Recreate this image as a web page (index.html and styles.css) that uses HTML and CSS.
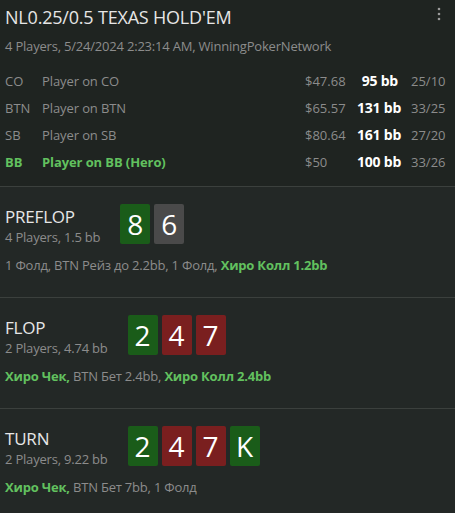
FILE: index.html
```html
<!DOCTYPE html>
<html>
<head>
<meta charset="utf-8">
<link rel="stylesheet" href="styles.css">
</head>
<body>
<div class="panel">
  <header class="head">
    <div class="title-row">
      <h1 class="title">NL0.25/0.5 TEXAS HOLD'EM</h1>
      <svg class="menu" width="4" height="14" viewBox="0 0 4 14"><circle cx="2" cy="2" r="1.3" fill="#9a9a9a"/><circle cx="2" cy="7" r="1.3" fill="#9a9a9a"/><circle cx="2" cy="12" r="1.3" fill="#9a9a9a"/></svg>
    </div>
    <div class="sub">4 Players, 5/24/2024 2:23:14 AM, WinningPokerNetwork</div>
    <div class="players">
      <div class="prow"><span class="pos">CO</span><span class="name">Player on CO</span><span class="money">$47.68</span><span class="bb">95 bb</span><span class="ratio">25/10</span></div>
      <div class="prow"><span class="pos">BTN</span><span class="name">Player on BTN</span><span class="money">$65.57</span><span class="bb">131 bb</span><span class="ratio">33/25</span></div>
      <div class="prow"><span class="pos">SB</span><span class="name">Player on SB</span><span class="money">$80.64</span><span class="bb">161 bb</span><span class="ratio">27/20</span></div>
      <div class="prow hero"><span class="pos">BB</span><span class="name">Player on BB (Hero)</span><span class="money">$50</span><span class="bb">100 bb</span><span class="ratio">33/26</span></div>
    </div>
  </header>

  <section class="street">
    <div class="street-top">
      <div class="street-info">
        <div class="street-name">PREFLOP</div>
        <div class="street-sub">4 Players, 1.5 bb</div>
      </div>
      <div class="cards"><span class="card green">8</span><span class="card grey">6</span></div>
    </div>
    <div class="actions">1 Фолд, BTN Рейз до 2.2bb, 1 Фолд, <b class="hero-act">Хиро Колл 1.2bb</b></div>
  </section>

  <section class="street">
    <div class="street-top">
      <div class="street-info">
        <div class="street-name">FLOP</div>
        <div class="street-sub">2 Players, 4.74 bb</div>
      </div>
      <div class="cards"><span class="card green">2</span><span class="card red">4</span><span class="card red">7</span></div>
    </div>
    <div class="actions"><b class="hero-act">Хиро Чек,</b> BTN Бет 2.4bb, <b class="hero-act">Хиро Колл 2.4bb</b></div>
  </section>

  <section class="street">
    <div class="street-top">
      <div class="street-info">
        <div class="street-name">TURN</div>
        <div class="street-sub">2 Players, 9.22 bb</div>
      </div>
      <div class="cards"><span class="card green">2</span><span class="card red">4</span><span class="card red">7</span><span class="card green">K</span></div>
    </div>
    <div class="actions"><b class="hero-act">Хиро Чек,</b> BTN Бет 7bb, 1 Фолд</div>
  </section>
</div>
</body>
</html>
```

FILE: styles.css
```css
html, body {
  margin: 0;
  padding: 0;
  background: #1f2421;
}
body {
  font-family: "Open Sans", "Noto Sans", sans-serif;
  color: #8c8c8c;
  width: 455px;
  height: 513px;
  overflow: hidden;
}
.panel {
  display: flex;
  flex-direction: column;
}
.head {
  padding: 4px 5px 0 5px;
  height: 187px;
  box-sizing: border-box;
  border-bottom: 1px solid #3b403d;
}
.title-row {
  display: flex;
  justify-content: space-between;
  align-items: flex-start;
}
.title {
  margin: 0;
  font-weight: 400;
  font-size: 18px;
  line-height: 26px;
  color: #e6e6e6;
  letter-spacing: -0.2px;
}
.menu {
  margin: 3px 9px 0 0;
}
.sub {
  font-size: 13px;
  line-height: 20px;
  margin-top: 6px;
  color: #8c8c8c;
  letter-spacing: -0.2px;
}
.players {
  margin-top: 11px;
  display: flex;
  flex-direction: column;
}
.prow {
  display: grid;
  grid-template-columns: 37px 1fr 52px 54px 39px;
  height: 27px;
  align-items: center;
  font-size: 13px;
  color: #8c8c8c;
}
.prow .name {
  letter-spacing: -0.1px;
}
.prow .bb {
  text-align: right;
  color: #ffffff;
  font-weight: 700;
  font-size: 14px;
  padding-right: 13px;
  white-space: nowrap;
  letter-spacing: -0.2px;
}
.prow .ratio {
  text-align: left;
}
.prow.hero .pos, .prow.hero .name {
  color: #62c15f;
  font-weight: 700;
}
.street {
  background: #232826;
  border-bottom: 1px solid #3b403d;
  height: 111px;
  box-sizing: border-box;
  padding: 17px 5px 0 5px;
}
.street:last-child {
  border-bottom: none;
}
.street-top {
  display: flex;
  align-items: flex-start;
  gap: 20px;
}
.street-info {
  padding-top: 2px;
}
.street-name {
  font-size: 17px;
  line-height: 22px;
  color: #e6e6e6;
  letter-spacing: -0.2px;
}
.street-sub {
  font-size: 13px;
  line-height: 18px;
  color: #8c8c8c;
  letter-spacing: -0.2px;
}
.cards {
  display: flex;
  gap: 4px;
}
.card {
  width: 30px;
  height: 40px;
  border-radius: 2px;
  display: flex;
  align-items: center;
  justify-content: center;
  font-size: 28px;
  color: #ffffff;
}
.card.green { background: #1a5c19; }
.card.red { background: #7a1f1f; }
.card.grey { background: #4a4a4a; }
.actions {
  margin-top: 9px;
  font-size: 13px;
  line-height: 20px;
  color: #8c8c8c;
  letter-spacing: -0.2px;
}
.hero-act {
  color: #62c15f;
  font-weight: 700;
}
```
